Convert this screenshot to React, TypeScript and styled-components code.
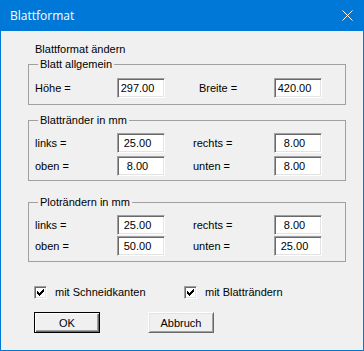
import React from "react";
import styled, { createGlobalStyle, css } from "styled-components";

const GlobalStyle = createGlobalStyle`
  html, body { margin: 0; padding: 0; background: #f0f0f0; }
  * { box-sizing: border-box; }
`;

const Window = styled.div`
  width: 364px;
  height: 351px;
  border: 1px solid #0078d7;
  border-top: none;
  background: #f0f0f0;
  display: flex;
  flex-direction: column;
  font-family: "Liberation Sans", Arial, sans-serif;
  font-size: 11px;
  color: #000;
`;

const TitleBar = styled.div`
  height: 31px;
  margin: 0 -1px;
  background: #0078d7;
  display: flex;
  align-items: center;
  justify-content: space-between;
  padding: 0 10px 0 10px;
  color: #fff;
  font-family: "Segoe UI", "Open Sans", "Noto Sans", sans-serif;
  font-size: 12px;
`;

const Title = styled.span`
  line-height: 16px;
`;

const CloseIcon = () => (
  <svg width="11" height="11" viewBox="0 0 11 11" style={{ marginRight: 1 }}>
    <path d="M0.5 0.5 L10.5 10.5 M10.5 0.5 L0.5 10.5" stroke="#fff" strokeWidth="1" />
  </svg>
);

const Body = styled.div`
  padding: 12px 17px 0 27px;
  display: flex;
  flex-direction: column;
`;

const Heading = styled.div`
  line-height: 13px;
  margin-left: 7px;
`;

const Group = styled.fieldset<{ $mt: number; $pt: number; $pb: number; $gap: number }>`
  margin: ${(p) => p.$mt}px 0 0 0;
  border: 1px solid #a0a0a0;
  padding: ${(p) => p.$pt}px 23px ${(p) => p.$pb}px 6px;
  min-width: 0;
  display: grid;
  grid-template-columns: 82px 48px 109px 48px;
  grid-auto-rows: 20px;
  row-gap: ${(p) => p.$gap}px;
  align-items: center;
`;

const Legend = styled.legend`
  padding: 0 2px;
  margin-left: 3px;
  line-height: 13px;
  font-size: 11px;
`;

const Label = styled.span<{ $indent?: number }>`
  line-height: 13px;
  padding-left: ${(p) => p.$indent ?? 0}px;
`;

const Field = styled.input`
  width: 48px;
  height: 20px;
  margin: 0;
  padding: 0 7px 0 0;
  border: 1px solid;
  border-color: #a0a0a0 #ffffff #ffffff #a0a0a0;
  box-shadow: inset 1px 1px 0 #696969, inset -1px -1px 0 #e3e3e3;
  background: #fff;
  font-family: "Liberation Sans", Arial, sans-serif;
  font-size: 11px;
  color: #000;
  text-align: center;
  outline: none;
`;

const CheckRow = styled.div`
  margin: 24px 0 0 6px;
  display: grid;
  grid-template-columns: 150px auto;
  height: 13px;
`;

const CheckItem = styled.label`
  display: flex;
  align-items: center;
  gap: 8px;
  line-height: 13px;
`;

const CheckBox = styled.span`
  width: 13px;
  height: 13px;
  border: 1px solid;
  border-color: #a0a0a0 #ffffff #ffffff #a0a0a0;
  box-shadow: inset 1px 1px 0 #696969, inset -1px -1px 0 #e3e3e3;
  background: #fff;
  display: flex;
  align-items: center;
  justify-content: center;
  flex: none;
`;

const CheckMark = () => (
  <svg width="7" height="7" viewBox="0 0 7 7" shapeRendering="crispEdges">
    <polygon points="0,2 2,4 7,-1 7,2 2,7 0,5" fill="#000" />
  </svg>
);

const ButtonRow = styled.div`
  margin: 13px 0 0 6px;
  display: flex;
  gap: 48px;
`;

const Button = styled.button<{ $default?: boolean }>`
  width: 66px;
  height: 21px;
  margin: 0;
  padding: 0;
  background: #f0f0f0;
  font-family: "Liberation Sans", Arial, sans-serif;
  font-size: 11px;
  color: #000;
  border: 1px solid;
  border-color: #ffffff #696969 #696969 #ffffff;
  box-shadow: inset 1px 1px 0 #e3e3e3, inset -1px -1px 0 #a0a0a0;
  ${(p) =>
    p.$default &&
    css`
      border-color: #000;
      box-shadow: inset 1px 1px 0 #fff, inset -1px -1px 0 #696969, inset -2px -2px 0 #a0a0a0;
    `}
`;

type Row = [string, string, string, string];

const Section = ({
  title,
  rows,
  mt,
  pt,
  pb,
  gap,
  indent,
}: {
  title: string;
  rows: Row[];
  mt: number;
  pt: number;
  pb: number;
  gap: number;
  indent: number;
}) => (
  <Group $mt={mt} $pt={pt} $pb={pb} $gap={gap}>
    <Legend>{title}</Legend>
    {rows.map((r) => (
      <React.Fragment key={r[0]}>
        <Label>{r[0]}</Label>
        <Field defaultValue={r[1]} readOnly />
        <Label $indent={indent}>{r[2]}</Label>
        <Field defaultValue={r[3]} readOnly />
      </React.Fragment>
    ))}
  </Group>
);

export default function App() {
  return (
    <>
      <GlobalStyle />
      <Window>
        <TitleBar>
          <Title>Blattformat</Title>
          <CloseIcon />
        </TitleBar>
        <Body>
          <Heading>Blattformat ändern</Heading>
          <Section
            title="Blatt allgemein"
            rows={[["Höhe =", "297.00", "Breite =", "420.00"]]}
            mt={2}
            pt={7}
            pb={6}
            gap={0}
            indent={34}
          />
          <Section
            title="Blattränder in mm"
            rows={[
              ["links =", "25.00", "rechts =", "8.00"],
              ["oben =", "8.00", "unten =", "8.00"],
            ]}
            mt={9}
            pt={6}
            pb={4}
            gap={3}
            indent={28}
          />
          <Section
            title="Ploträndern in mm"
            rows={[
              ["links =", "25.00", "rechts =", "8.00"],
              ["oben =", "50.00", "unten =", "25.00"],
            ]}
            mt={15}
            pt={6}
            pb={5}
            gap={1}
            indent={28}
          />
          <CheckRow>
            <CheckItem>
              <CheckBox>
                <CheckMark />
              </CheckBox>
              mit Schneidkanten
            </CheckItem>
            <CheckItem>
              <CheckBox>
                <CheckMark />
              </CheckBox>
              mit Blatträndern
            </CheckItem>
          </CheckRow>
          <ButtonRow>
            <Button $default>OK</Button>
            <Button>Abbruch</Button>
          </ButtonRow>
        </Body>
      </Window>
    </>
  );
}
